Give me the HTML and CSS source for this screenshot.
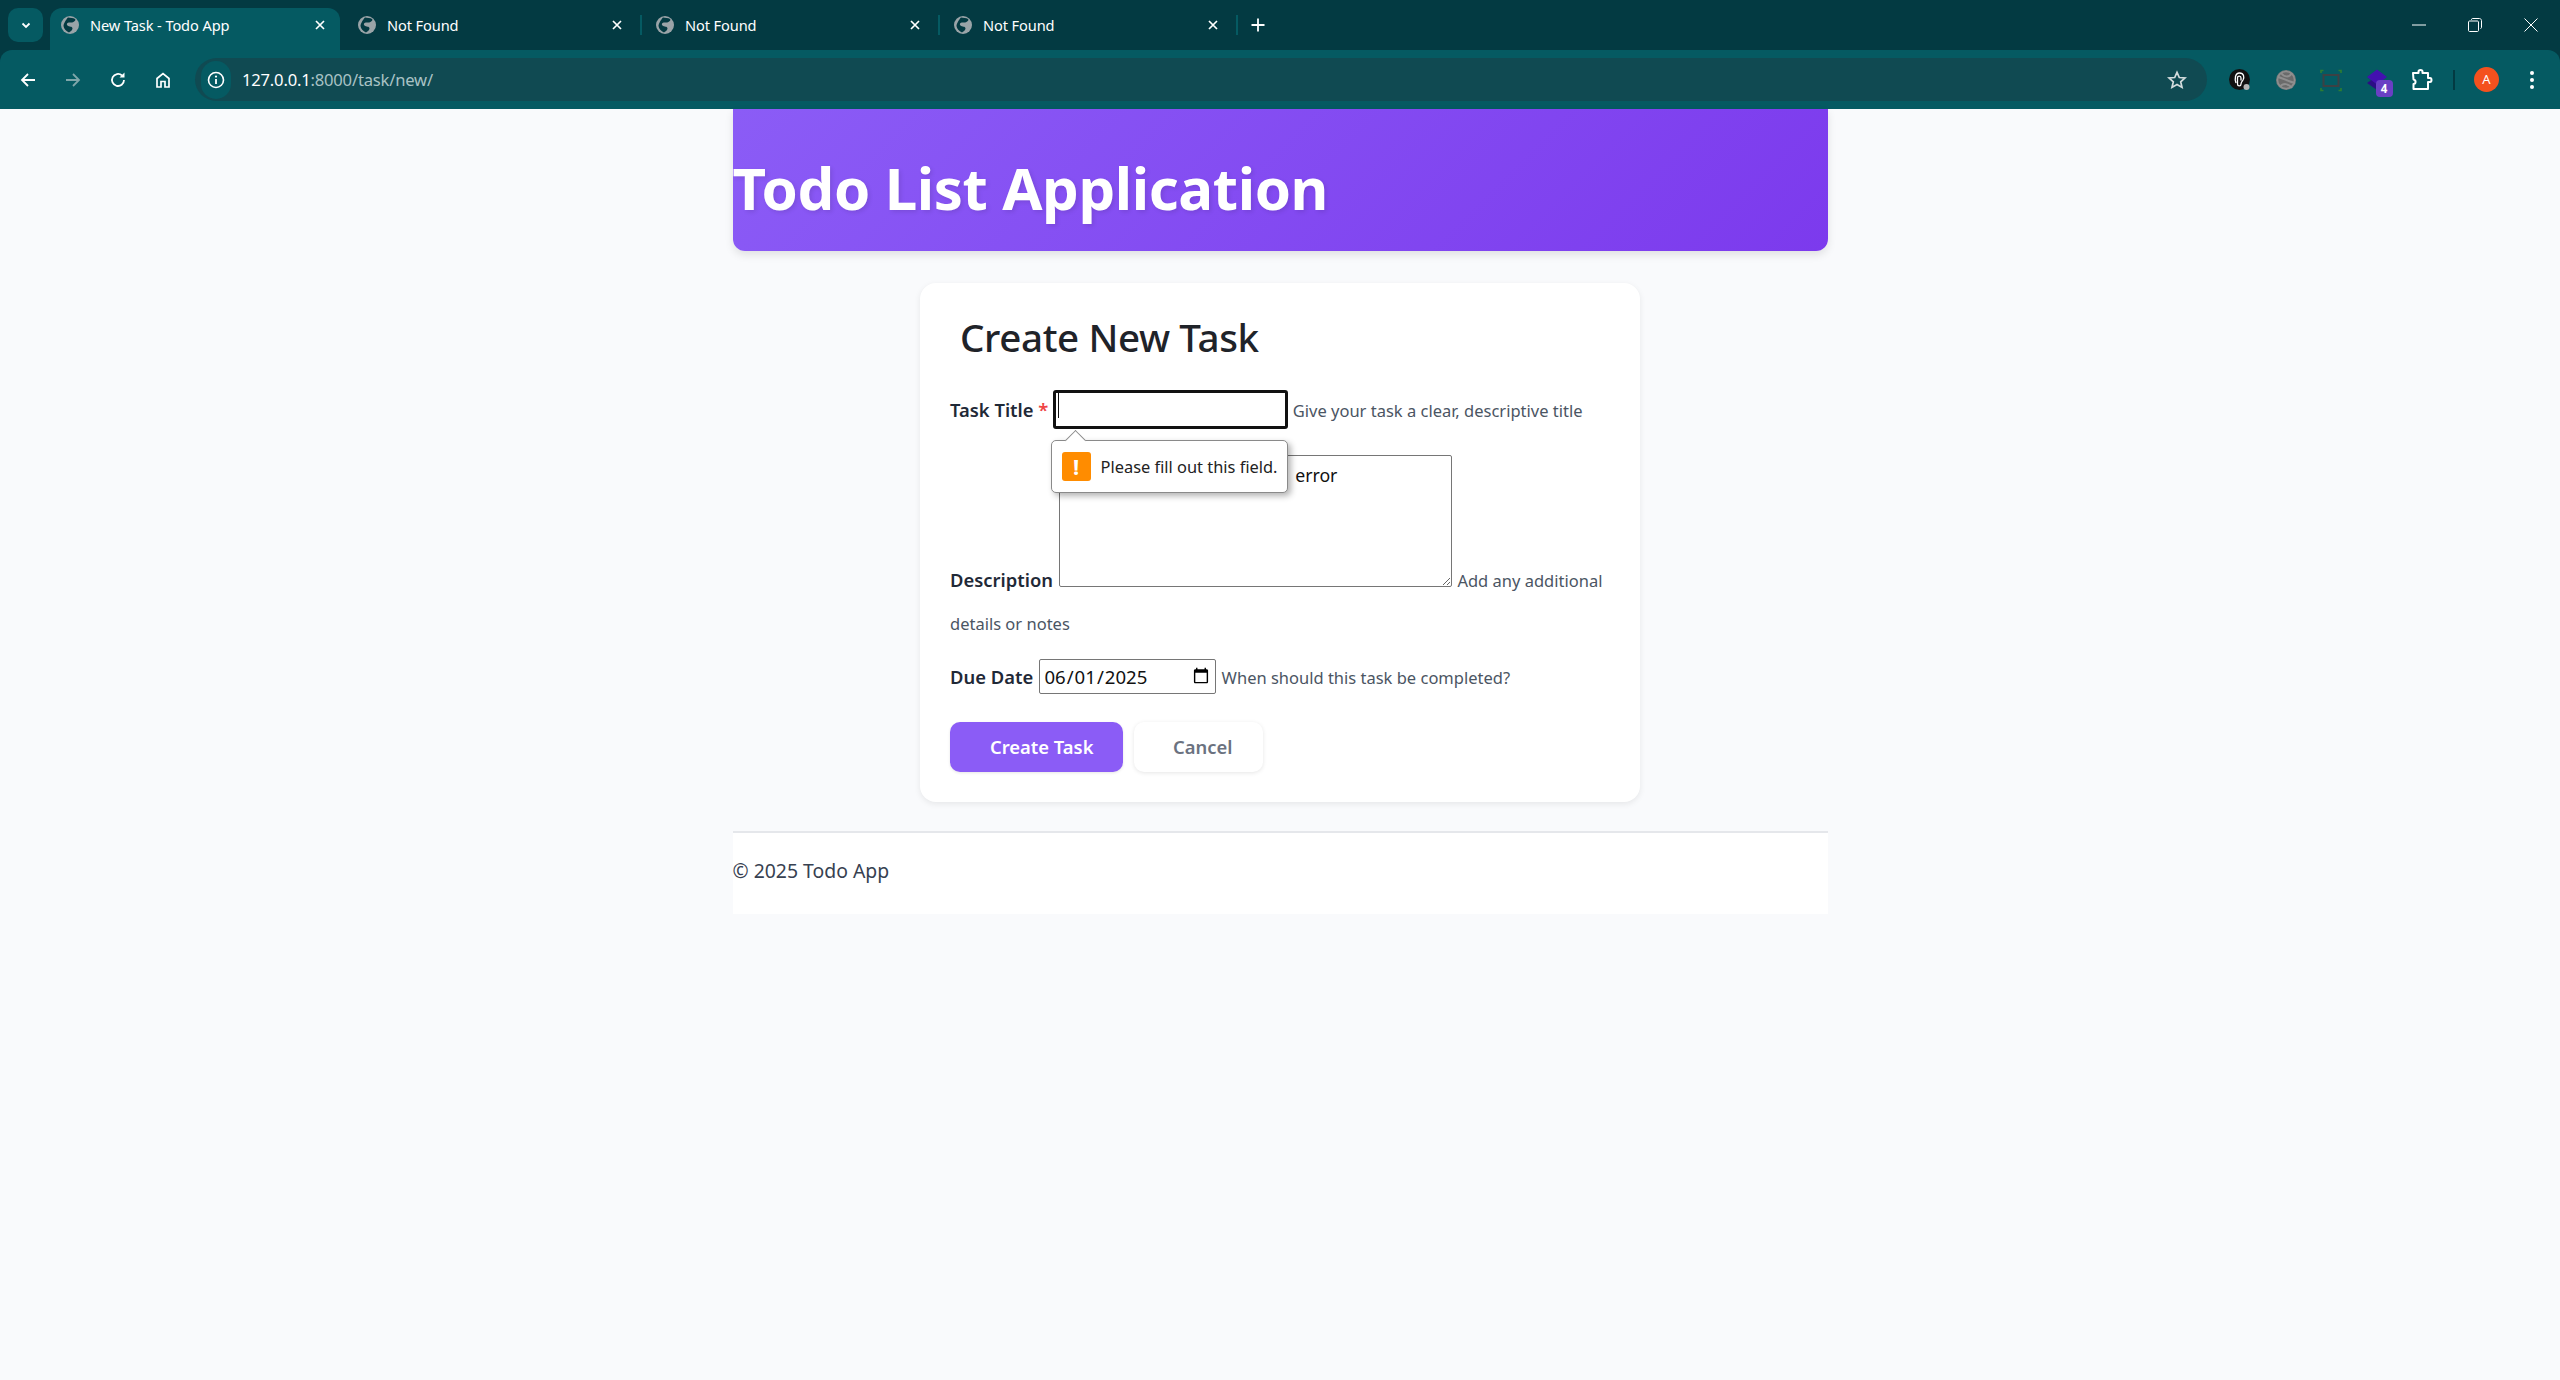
FILE: index.html
```html
<!DOCTYPE html>
<html lang="en">
<head>
  <meta charset="UTF-8" />
  <meta name="viewport" content="width=device-width, initial-scale=1.0"/>
  <title>New Task - Todo App</title>
  <link rel="stylesheet" href="styles.css">
</head>
<body>
  <svg class="defs" width="0" height="0">
    <symbol id="globe" viewBox="0 0 18 18">
      <circle cx="9" cy="9" r="9" fill="#9aa4a8"/>
      <path d="M7 1.500C9 2 12.500 1.500 14 3 15.500 4.500 12 7 9.500 6.500 6.500 6 5 8 6.500 9.500 8 11 11.500 10 11.500 12.500 11.500 14.500 9 15.500 8 16.500 5 15 2.800 13 2.500 10 2.500 8 5 3.500 7 1.500Z" fill="#033a42"/>
    </symbol>
    <symbol id="close" viewBox="0 0 12 12">
      <path d="M2 2 10 10M10 2 2 10" stroke="#fff" stroke-width="1.700" fill="none"/>
    </symbol>
  </svg>

  <div class="browser-chrome">
    <div class="tabstrip">
      <button class="tab-search">
        <svg width="12" height="12" viewBox="0 0 12 12"><path d="M2.500 4.500 6 8 9.500 4.500" stroke="#fff" stroke-width="1.800" fill="none"/></svg>
      </button>
      <div class="tab tab-active">
        <svg class="favicon"><use href="#globe"/></svg>
        <span class="tab-title">New Task - Todo App</span>
        <svg class="tab-close"><use href="#close"/></svg>
      </div>
      <div class="tab tab-first">
        <svg class="favicon"><use href="#globe"/></svg>
        <span class="tab-title">Not Found</span>
        <svg class="tab-close"><use href="#close"/></svg>
      </div>
      <div class="tab-sep"></div>
      <div class="tab">
        <svg class="favicon"><use href="#globe"/></svg>
        <span class="tab-title">Not Found</span>
        <svg class="tab-close"><use href="#close"/></svg>
      </div>
      <div class="tab-sep"></div>
      <div class="tab">
        <svg class="favicon"><use href="#globe"/></svg>
        <span class="tab-title">Not Found</span>
        <svg class="tab-close"><use href="#close"/></svg>
      </div>
      <div class="tab-sep"></div>
      <svg class="new-tab" width="16" height="16" viewBox="0 0 16 16"><path d="M8 1.500V14.500M1.500 8H14.500" stroke="#fff" stroke-width="1.800" fill="none"/></svg>
      <div class="win-controls">
        <svg width="14" height="14" viewBox="0 0 14 14"><path d="M0 7H14" stroke="#fff" stroke-width="1"/></svg>
        <svg width="14" height="14" viewBox="0 0 14 14"><path d="M3.500 2V1.500C3.500 1 4 .5 4.500 .5H11.500C12.500 .5 13.500 1.500 13.500 2.500V9.500C13.500 10 13 10.500 12.500 10.500M1.500 3H9.500C10 3 10.500 3.500 10.500 4V12.500C10.500 13 10 13.500 9.500 13.500H1.500C1 13.500 .5 13 .5 12.500V4C.5 3.500 1 3 1.500 3Z" stroke="#fff" stroke-width="1" fill="none"/></svg>
        <svg width="14" height="14" viewBox="0 0 14 14"><path d="M.5 .5 13.500 13.500M13.500 .5 .5 13.500" stroke="#fff" stroke-width="1" fill="none"/></svg>
      </div>
    </div>

    <div class="toolbar">
      <svg class="nav-icon" viewBox="0 0 18 18"><path d="M16 9H3M9 3 3 9 9 15" stroke="#fff" stroke-width="1.800" fill="none"/></svg>
      <svg class="nav-icon" viewBox="0 0 18 18"><path d="M2 9H15M9 3 15 9 9 15" stroke="#7fa6aa" stroke-width="1.800" fill="none"/></svg>
      <svg class="nav-icon" viewBox="0 0 18 18"><path d="M15 9A6 6 0 1 1 13 4.500" stroke="#fff" stroke-width="1.800" fill="none"/><path d="M15.500 1.500V6.500H10.500Z" fill="#fff"/></svg>
      <svg class="nav-icon" viewBox="0 0 18 18"><path d="M3 16V7.500L9 2.500 15 7.500V16H11V10.500H7V16Z" stroke="#fff" stroke-width="1.700" fill="none"/></svg>
      <div class="omnibox">
        <span class="site-info">
          <svg width="18" height="18" viewBox="0 0 18 18"><circle cx="9" cy="9" r="7.500" stroke="#fff" stroke-width="1.600" fill="none"/><path d="M9 8V13" stroke="#fff" stroke-width="1.800"/><circle cx="9" cy="5.600" r="1.100" fill="#fff"/></svg>
        </span>
        <span class="url"><b>127.0.0.1</b>:8000/task/new/</span>
        <svg class="star" width="20" height="20" viewBox="0 0 20 20"><path d="M10 2.300 12.300 7.500 18 8 13.700 11.800 15 17.400 10 14.500 5 17.400 6.300 11.800 2 8 7.700 7.500Z" stroke="#d4dcdd" stroke-width="1.700" fill="none"/></svg>
      </div>
      <div class="ext-icons">
        <svg width="24" height="24" viewBox="0 0 24 24"><circle cx="11.500" cy="11.500" r="10.500" fill="#111"/><path d="M8 15C6.500 11 7 5 11.500 5 16 5 16.500 9.500 15 12 14 13.500 13 14 13 16 13 18.500 9.500 18.500 9.500 16V10C9.500 7.500 13 7.500 13 10V12.500" stroke="#fff" stroke-width="1.300" fill="none"/><circle cx="18.500" cy="19" r="3" fill="#b5b5b5"/></svg>
        <svg width="24" height="24" viewBox="0 0 24 24"><circle cx="12" cy="12" r="10" fill="#7c7c7c"/><circle cx="12" cy="12" r="8.500" stroke="#8f8f8f" stroke-width="1.500" fill="#6b6b6b"/><path d="M4 9C9 10 15 14 21 15M7 5C10 9 15 10 18 5M6 19C9 15 14 15 18 20" stroke="#8f8f8f" stroke-width="2" fill="none"/></svg>
        <svg width="24" height="24" viewBox="0 0 24 24"><rect x="4.500" y="7" width="15" height="11" stroke="#3c4144" stroke-width="2" fill="none"/><path d="M2 5V2.500H4.500M19.500 2.500H22V5M22 20V22.500H19.500M4.500 22.500H2V20" stroke="#2e7d32" stroke-width="1.600" fill="none"/></svg>
        <span class="ext-badged">
          <svg width="24" height="24" viewBox="0 0 24 24"><path d="M2 15 12 22 22 15 12 8Z" fill="#2c0d85"/><path d="M12 1.500 22 9 12 16.500 2 9Z" fill="#4310b0"/></svg>
          <span class="badge">4</span>
        </span>
        <svg width="24" height="24" viewBox="0 0 24 24"><path d="M3 5H8.500V3.500C8.500 1.500 12.500 1.500 12.500 3.500V5H18V10H20C22 10 22 14 20 14H18V21H3.500V16C6 16 6.500 12 3.500 11.500Z" stroke="#fff" stroke-width="2" fill="none" stroke-linejoin="round"/></svg>
      </div>
      <div class="toolbar-sep"></div>
      <span class="avatar">A</span>
      <svg class="kebab" width="6" height="20" viewBox="0 0 6 20"><circle cx="3" cy="3" r="2" fill="#fff"/><circle cx="3" cy="10" r="2" fill="#fff"/><circle cx="3" cy="17" r="2" fill="#fff"/></svg>
    </div>
  </div>

  <div class="container">
    <header class="app-header">
      <h1>Todo List Application</h1>
    </header>

    <main class="form-card">
      <h2>Create New Task</h2>
      <form>
        <div class="form-group group-title">
          <label>Task Title <span class="req">*</span></label>
          <span class="input-wrap">
            <input type="text" class="title-input" />
            <span class="caret"></span>
            <span class="bubble">
              <span class="bubble-arrow"></span>
              <span class="bubble-icon">!</span>
              <span>Please fill out this field.</span>
            </span>
          </span>
          <small>Give your task a clear, descriptive title</small>
        </div>
        <div class="form-group group-desc">
          <label>Description</label>
          <textarea class="desc-input">error</textarea>
          <small>Add any additional details or notes</small>
        </div>
        <div class="form-group group-date">
          <label>Due Date</label>
          <input type="date" class="date-input" value="2025-06-01" />
          <small>When should this task be completed?</small>
        </div>
        <div class="form-actions">
          <a class="btn btn-primary">Create Task</a>
          <a class="btn btn-cancel">Cancel</a>
        </div>
      </form>
    </main>

    <footer class="app-footer">© 2025 Todo App</footer>
  </div>
</body>
</html>
```

FILE: styles.css
```css
html, body { margin:0; padding:0; }
body { font-family:"Noto Sans", "Open Sans", sans-serif; background:#f9fafc; color:#1f2937; height:1380px; overflow:hidden; }
.defs { position:absolute; }

/* browser chrome */
.browser-chrome { background:#033a42; }
.tabstrip { height:50px; display:flex; align-items:flex-end; position:relative; color:#fff; }
.tab-search { width:35px; height:34px; margin:0 7px 8px 8px; border:none; border-radius:10px; background:#055a62; display:flex; align-items:center; justify-content:center; padding:0; }
.tab { width:296px; height:42px; padding:0 17px 8px 14px; box-sizing:border-box; display:flex; align-items:center; font-size:14.600px; letter-spacing:-.1px; flex:none; }
.tab-active { width:290px; padding:0 14px 8px 11px; background:#055a62; border-radius:12px 12px 0 0; }
.tab-first { margin-left:4px; }
.favicon { width:18px; height:18px; margin-right:11px; flex:none; }
.tab-title { flex:1; white-space:nowrap; }
.tab-close { width:12px; height:12px; flex:none; }
.tab-sep { width:2px; height:20px; background:#055a62; margin-bottom:15px; flex:none; }
.new-tab { margin:0 0 17px 12px; }
.win-controls { margin-left:auto; display:flex; gap:42px; padding-right:22px; align-self:center; }

.toolbar { height:59px; background:#055a62; border-radius:12px 12px 0 0; display:flex; align-items:center; color:#fff; padding-left:19px; }
.nav-icon { width:18px; height:18px; margin-right:27px; flex:none; }
.omnibox { width:2012px; height:43px; margin-left:-4px; background:#104a52; border-radius:22px; display:flex; align-items:center; flex:none; }
.site-info { width:30px; height:38px; margin-left:6px; border-radius:19px; background:#055a62; display:flex; align-items:center; justify-content:center; }
.url { margin-left:11px; font-size:16.600px; letter-spacing:-.2px; color:#a9c2c5; }
.url b { font-weight:400; color:#fff; }
.star { margin-left:auto; margin-right:20px; }
.ext-icons { display:flex; align-items:center; gap:21.500px; margin-left:21px; }
.ext-badged { position:relative; height:24px; }
.badge { position:absolute; right:-4px; top:12px; width:17px; height:17px; background:#6a3fc4; border-radius:4px; font-size:11.500px; font-weight:700; text-align:center; line-height:17px; }
.toolbar-sep { width:2px; height:20px; background:#033a42; margin:0 19px 0 19px; }
.avatar { width:25px; height:25px; border-radius:50%; background:#f4511e; font-size:13px; text-align:center; line-height:25px; }
.kebab { margin-left:30px; }

/* page */
.container { width:1095px; margin:0 auto; }
.app-header { height:142px; box-sizing:border-box; padding-top:41px; background:linear-gradient(135deg, #8b5cf6, #7c3aed); border-radius:0 0 12px 12px; box-shadow:0 4px 8px rgba(0,0,0,.1); }
.app-header h1 { margin:0; font-size:58.200px; line-height:76px; font-weight:700; letter-spacing:-.4px; color:#fff; text-shadow:2px 2px 4px rgba(0,0,0,.1); }

.form-card { width:720px; margin:32px auto 0; padding:26px 30px 30px; box-sizing:border-box; background:#fff; border-radius:16px; box-shadow:0 2px 6px rgba(0,0,0,.08); }
.form-card h2 { margin:0 0 21px 10px; font-size:38.600px; line-height:56px; font-weight:500; letter-spacing:-.4px; color:#1f2329; }
.form-group { line-height:42px; font-size:20px; }
.form-group label { font-size:18.400px; font-weight:600; color:#1f2937; }
.form-group small { font-size:16.500px; color:#4b5563; }
.req { color:#ef4444; }
.group-desc { margin-top:23px; }
.group-date { margin-top:11px; }

.input-wrap { position:relative; display:inline-block; vertical-align:3px; margin-left:-1px; }
.title-input { width:235px; height:39px; box-sizing:border-box; border:3px solid #111; border-radius:3px; padding:0 2px; background:#fff; outline:none; vertical-align:baseline; }
.caret { position:absolute; left:5px; top:7px; width:1px; height:25px; background:#111; }
.bubble { position:absolute; left:-2px; top:54px; width:237px; height:53px; box-sizing:border-box; background:#fff; border:1px solid #8a8a8a; border-radius:5px; box-shadow:3px 3px 6px rgba(0,0,0,.3); display:flex; align-items:center; gap:10px; padding-left:10px; font-size:16.400px; line-height:20px; color:#222; white-space:nowrap; z-index:2; }
.bubble-arrow { position:absolute; left:16px; top:-8px; width:14px; height:14px; background:#fff; border-left:1px solid #8a8a8a; border-top:1px solid #8a8a8a; transform:rotate(45deg); }
.bubble-icon { width:29px; height:29px; flex:none; background:#ff8c00; border-radius:3px; color:#fff; font-size:22px; font-weight:700; line-height:29px; text-align:center; }
.desc-input { width:393px; height:132px; margin-left:1px; box-sizing:border-box; padding:6px 2px 2px 235px; border:1px solid #767676; border-radius:2px; font-family:inherit; font-size:17.700px; line-height:26px; color:#111; background:#fff; vertical-align:baseline; }
.date-input { width:177px; height:35px; margin-left:1px; box-sizing:border-box; padding:0 3px; border:1px solid #767676; border-radius:2px; font-family:inherit; font-size:18.600px; color:#111; background:#fff; }

.form-actions { display:flex; gap:11px; margin-top:23px; }
.btn { height:50px; box-sizing:border-box; border-radius:10px; font-size:18.400px; font-weight:600; line-height:50px; }
.btn-primary { width:173px; padding-left:40px; background:#8b5cf6; color:#fff; box-shadow:0 1px 3px rgba(0,0,0,.1); }
.btn-cancel { width:129px; padding-left:39px; background:#fff; color:#6b7280; box-shadow:0 1px 4px rgba(0,0,0,.1); }

.app-footer { margin-top:29px; height:83px; box-sizing:border-box; border-top:2px solid #e5e7eb; background:#fff; padding-top:18px; font-size:19.400px; line-height:40px; color:#374151; }
```
